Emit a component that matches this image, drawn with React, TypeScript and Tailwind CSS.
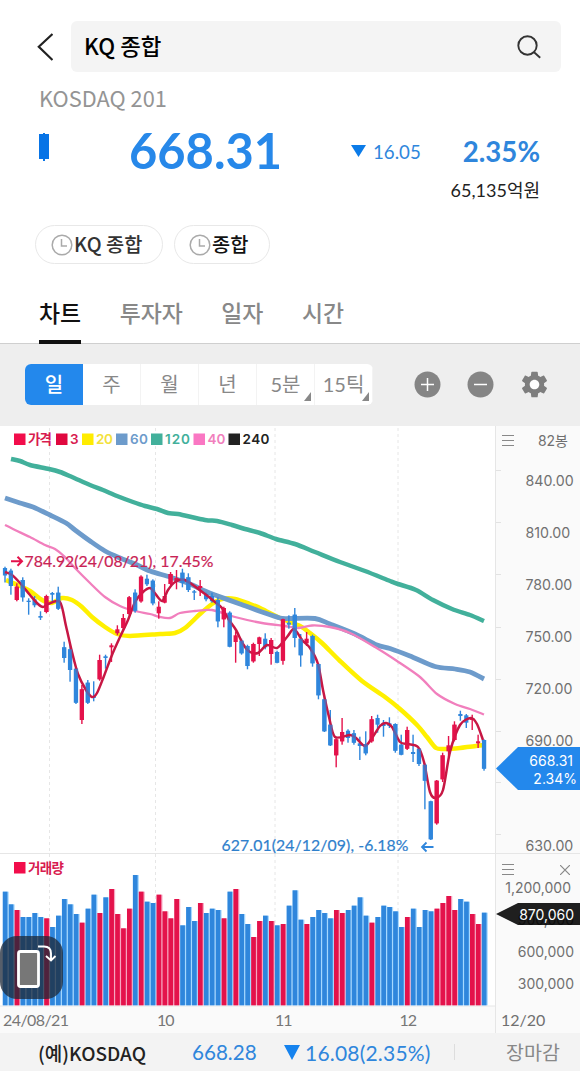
import { MdSettings } from "react-icons/md";

type Direction = "up" | "down";

// [direction, high, body top, body bottom, low]
type Candle = [Direction, number, number, number, number];

const UP = "#e4124b";
const DOWN = "#2f86dc";
const STEP = 5.914;

const candles: Candle[] = [
  ["down", 566.7, 568, 575.5, 582.5],
  ["down", 568.7, 570.7, 586, 594.7],
  ["up", 583.3, 586.7, 600, 601.3],
  ["down", 577.3, 580, 597.3, 601.7],
  ["down", 598.3, 600.7, 602, 614.7],
  ["down", 596, 599.3, 605.3, 607.3],
  ["down", 611.3, 616, 617.7, 620],
  ["up", 594.7, 596, 612, 613.3],
  ["down", 592, 593, 594.7, 602.7],
  ["down", 586.7, 592.7, 608.7, 610],
  ["down", 641.7, 647.3, 658, 662.7],
  ["down", 644.3, 649.3, 670, 681.7],
  ["down", 666.7, 668.7, 702.7, 704],
  ["up", 685, 689.3, 720, 724],
  ["down", 680, 682.7, 702.7, 704],
  ["down", 681.3, 696, 698, 701.3],
  ["up", 654.7, 660, 679.3, 680.7],
  ["down", 654.7, 656.3, 658, 668.7],
  ["up", 643.3, 645.3, 647.3, 662],
  ["up", 625.3, 629.3, 633.3, 635.3],
  ["up", 614, 618, 628, 630],
  ["up", 596, 597.3, 614, 615.3],
  ["down", 589.3, 592.7, 610.7, 612.7],
  ["up", 575.3, 576.7, 601.3, 602.7],
  ["down", 574.7, 578.7, 584.3, 586],
  ["down", 579.3, 580.7, 603.3, 605.3],
  ["up", 601.3, 606.7, 613.3, 618.7],
  ["up", 584, 596, 602.7, 603.3],
  ["up", 572, 574, 584, 585.3],
  ["up", 570, 578, 580.7, 589.3],
  ["down", 568.7, 572.7, 582.7, 587.3],
  ["down", 573.3, 577.3, 590, 592],
  ["down", 590, 591.3, 592.7, 600],
  ["up", 580, 586, 588, 596],
  ["down", 592.7, 594, 599.3, 601.3],
  ["down", 592.7, 596, 601.3, 602.7],
  ["down", 597.3, 600, 621.3, 627.3],
  ["up", 606.7, 608, 619.3, 627.3],
  ["down", 611.3, 612.7, 646.7, 647.3],
  ["up", 631.3, 635.3, 642, 662.7],
  ["down", 638.7, 640.7, 653.3, 654.7],
  ["down", 644.7, 646, 666, 669.3],
  ["up", 642.7, 644, 661.3, 662.7],
  ["up", 636.7, 637.3, 644, 656],
  ["down", 633.3, 638.7, 647.3, 649.3],
  ["up", 638, 640, 654, 664.7],
  ["down", 650.7, 652, 662.7, 663.3],
  ["up", 618.7, 619.3, 660.7, 664.7],
  ["down", 615.3, 622.7, 624.7, 628.7],
  ["down", 608, 614.7, 638, 647.3],
  ["down", 634, 638.7, 655.3, 666.7],
  ["up", 632, 638.7, 643.3, 646],
  ["down", 634.7, 636, 663.3, 666.7],
  ["down", 663, 664, 695.3, 699.3],
  ["down", 695.3, 699.3, 731.3, 732],
  ["down", 710, 724.7, 745.3, 746],
  ["up", 738.3, 739.3, 755.3, 767.3],
  ["up", 718, 732, 741.3, 744.7],
  ["down", 729.3, 730.7, 738, 742.7],
  ["down", 730, 733.3, 742.7, 744.7],
  ["down", 736.7, 743.3, 746, 760],
  ["down", 731.3, 744, 753.3, 755.3],
  ["up", 716, 719.3, 741.3, 742.7],
  ["down", 714.7, 718, 724.7, 732.7],
  ["down", 720, 723.3, 726, 736.7],
  ["down", 717.3, 723.3, 726, 728],
  ["down", 723.3, 724, 750.7, 752.7],
  ["down", 734.7, 744.7, 754.7, 755.3],
  ["up", 726.7, 730, 748.7, 750],
  ["down", 734.7, 752, 754, 762],
  ["down", 748, 748.7, 764, 766],
  ["down", 763.3, 764.7, 780.7, 809.3],
  ["down", 800.7, 801.3, 839.3, 840],
  ["up", 780, 780.7, 823.3, 824.7],
  ["up", 752.7, 755.3, 779.3, 782],
  ["up", 736, 745.3, 751.3, 756.7],
  ["up", 721.3, 724.7, 740, 741.3],
  ["down", 710.7, 714, 716, 720.7],
  ["down", 714, 715.3, 722.7, 728],
  ["up", 714.7, 718, 720, 730],
  ["up", 734.7, 741.3, 743.3, 748],
  ["down", 739.3, 740, 768.7, 770.7],
];

// Top edge of each volume bar, measured down from the top of the pane in thirds
const volumeTops = [
  125, 163, 180, 201, 201, 189, 201, 205, 231, 197, 147, 163, 192, 218, 176, 134, 189, 142, 117, 192, 235, 176,
  75, 125, 155, 159, 134, 184, 205, 147, 226, 171, 213, 159, 189, 176, 180, 205, 125, 117, 192, 222, 261, 213,
  197, 213, 226, 222, 167, 121, 209, 222, 201, 180, 189, 205, 180, 189, 180, 167, 142, 197, 218, 201, 167, 171,
  184, 231, 201, 176, 231, 180, 184, 176, 159, 138, 180, 147, 155, 192, 222, 188,
];

const volumeUp = new Set([
  2, 7, 13, 16, 18, 19, 20, 21, 23, 26, 27, 28, 29, 33, 37, 39, 42, 43, 45, 47, 51, 56, 57, 62, 68, 73, 74, 75, 76,
  79, 80,
]);

const averages = [
  {
    color: "#fff000",
    width: 4.5,
    points:
      "6,580 20,586 30,591 42,600 52,603 62,598 72,600 82,607 92,617 105,627 117,634 130,636 160,634 175,633 185,628 200,614 212,604 222,599 235,599 250,604 262,609 280,618 300,626 310,633 322,643 340,661 362,681 385,697 400,709 417,725 427,737 436,748 445,749 460,748 484,745",
  },
  {
    color: "#6d9bcb",
    width: 4.8,
    points:
      "5,498 20,503 33,507 50,515 66,523 75,530 90,541 105,551 120,558 135,564 150,571 170,577 190,584 205,591 215,595 240,604 262,612 280,618 290,618.5 315,618.5 330,624 355,634 377,645 390,648.5 410,656 435,666.5 455,669 470,672 484,679",
  },
  {
    color: "#42b09b",
    width: 4.5,
    points:
      "11,459 20,461 30,465 49,469 60,472 72,477 90,485 103,490 117,496 133,502 145,506 157,509 168,513 178,514 205,520 217,521 232,525 245,529 260,533 276,539 295,544 315,552 340,562 365,571 390,581 398,584 416,590 433,600 452,609 470,615 484,621",
  },
  {
    color: "#f17fbd",
    width: 2.3,
    points:
      "5,525 15,530 30,537 45,545 55,549 65,557 75,568 90,583 105,597 120,606 135,611 150,614 160,617 170,618 180,613 195,611 212,610 235,617 262,623 285,626 298,628 312,625.5 330,627 350,633 375,647 397,661 420,677 437,694 455,704 470,709 484,714.5",
  },
];

const shortAverage =
  "5,572 12,575 20,583 30,595 38,604 43,607 48,604 60,602 66,626 72,652 78,674 86,690 92,697 97,693 104,676 112,655 120,637 128,620 135,602 143,592 150,588 154,592 162,601 168,590 175,582 185,580 205,594 215,602 222,608 229,620 236,630 243,644 250,652 258,653 267,645 277,648 287,637 294,629 302,640 310,648 318,664 323,690 329,717 335,737 350,735 356,738 365,746 372,738 380,726 386,723 392,727 400,742 408,744 418,747 424,762 430,792 436,798 443,790 450,752 460,725 471,718 477,724 483,740";

const legend = [
  { label: "가격", color: "#f20d4b", text: "#d81b50", x: 14, width: 24 },
  { label: "3", color: "#e0083f", text: "#d81b50", x: 56, width: 9 },
  { label: "20", color: "#ffec00", text: "#f3e13c", x: 82, width: 17 },
  { label: "60", color: "#6d9bcb", text: "#6d9bcb", x: 116, width: 18 },
  { label: "120", color: "#42b09b", text: "#42b09b", x: 151, width: 25 },
  { label: "40", color: "#fa77c3", text: "#f17fbd", x: 193.5, width: 18 },
  { label: "240", color: "#222222", text: "#222222", x: 228.5, width: 27 },
];

const gridX = [49.5, 155.5, 275, 398];
const ticks = [470, 522, 574, 627, 679, 731, 782, 834];
const priceLabels = ["840.00", "810.00", "780.00", "750.00", "720.00", "690.00", "", "630.00"];
const periods = ["일", "주", "월", "년", "5분", "15틱"];
const tabs = ["차트", "투자자", "일자", "시간"];

const kr = "font-['Noto_Sans_CJK_KR',sans-serif]";
const lato = "font-[Lato,'Noto_Sans_CJK_KR',sans-serif]";
const inter = "font-[Inter,'Noto_Sans_CJK_KR',sans-serif]";

// Rounds a list of "x,y" points into a curve that passes through all of them
function smooth(points: string) {
  const p = points.split(" ").map((pair) => pair.split(",").map(Number));
  let d = `M${p[0][0]} ${p[0][1]}`;
  for (let i = 0; i < p.length - 1; i++) {
    const before = p[i - 1] ?? p[i];
    const [x1, y1] = p[i];
    const [x2, y2] = p[i + 1];
    const after = p[i + 2] ?? p[i + 1];
    d += `C${x1 + (x2 - before[0]) / 7} ${y1 + (y2 - before[1]) / 7} ${x2 - (after[0] - x1) / 7} ${y2 - (after[1] - y1) / 7} ${x2} ${y2}`;
  }
  return d;
}

function ClockIcon() {
  return (
    <svg className="size-[22px] shrink-0" viewBox="0 0 22 22" fill="none" stroke="#aaa" strokeWidth="1.5">
      <circle cx="11" cy="11" r="9.8" />
      <path d="M10.5 5v7h5.5" />
    </svg>
  );
}

function MenuIcon() {
  return (
    <svg className="h-[11px] w-3" viewBox="0 0 12 11" stroke="#888" strokeWidth="1">
      <path d="M0 .5h12M0 5.5h12M0 10.500h12" />
    </svg>
  );
}

function Header() {
  return (
    <header className="h-[344px] border-b border-[#cfcfcf] bg-white">
      <div className="flex items-center pt-[21px] pl-[37px]">
        <svg className="h-7 w-4" viewBox="0 0 16 28" fill="none" stroke="#222" strokeWidth="2.2">
          <path d="M15.5 1L1.8 13.8 15.5 27" />
        </svg>
        <div className="ml-[18px] flex h-[51px] w-[490px] items-center justify-between rounded-md bg-[#f4f4f4] pr-5 pl-[13px]">
          <span className={`${kr} pb-[2px] text-[22.4px] leading-none font-medium text-black`}>KQ 종합</span>
          <svg className="size-6" viewBox="0 0 24 24" fill="none" stroke="#333" strokeWidth="1.9">
            <circle cx="10.5" cy="10.5" r="9.2" />
            <path d="M16.8 17l6.4 5.8" />
          </svg>
        </div>
      </div>

      <p className={`${kr} mt-[10px] ml-[39px] h-[33px] text-[21.8px] leading-8 text-[#949494]`}>KOSDAQ 201</p>

      <div className="flex h-[64px] pl-[39px]">
        <svg className="mt-[18px] h-8 w-[10px] shrink-0" viewBox="0 0 10 32">
          <path d="M0 1h4V0h2v1h4v25H6v2H4v-2H0z" fill="#0874e6" />
        </svg>
        <strong className={`${lato} ml-20 w-[152px] text-[48.8px] leading-[70px] font-bold text-[#2788e9]`}>668.31</strong>
        <svg className="mt-[30px] ml-[70px] h-3 w-[15px] shrink-0" viewBox="0 0 15 12">
          <path d="M0 0h15L7.500 12z" fill="#0b7be8" />
        </svg>
        <span className={`${lato} ml-[7px] w-[48px] text-[18.7px] leading-[74px] text-[#2f86dc]`}>16.05</span>
        <strong className={`${lato} w-[119px] text-right text-[27.6px] leading-[74px] font-bold text-[#2f86dc]`}>
          2.35%
        </strong>
      </div>
      <p className={`${lato} h-6 w-[540px] text-right text-[18px] leading-[23px] text-[#222]`}>65,135억원</p>

      <div className={`${kr} mt-[22px] ml-[35px] flex gap-[11px] text-[19.8px] leading-none font-medium`}>
        <div className="flex h-[39px] w-[128px] items-center gap-px rounded-full border-[1.5px] border-[#e8e8e8] pl-[15px] text-[#333]">
          <ClockIcon />
          <span className="pb-px whitespace-nowrap">KQ 종합</span>
        </div>
        <div className="flex h-[39px] w-[96px] items-center gap-px rounded-full border-[1.5px] border-[#e8e8e8] pl-[14px] text-[#111]">
          <ClockIcon />
          <span className="pb-px whitespace-nowrap">종합</span>
        </div>
      </div>

      <nav className={`${kr} mt-[19px] ml-[39px] flex h-[61px] gap-[38.500px] text-[22.9px] leading-[58px] font-medium`}>
        {tabs.map((tab, i) => (
          <button
            key={tab}
            className={
              i === 0
                ? "flex h-[61px] border-b-4 border-[#111] text-[#111]"
                : "flex h-[61px] border-b-4 border-transparent text-[#888]"
            }
          >
            {tab}
          </button>
        ))}
      </nav>
    </header>
  );
}

function Toolbar() {
  return (
    <div className="flex h-[82px] items-center bg-[#eeeeee] pb-[2px] pl-[25px]">
      <div className={`${lato} flex h-[41px] w-[348px] overflow-hidden rounded-md bg-white text-[20px] text-[#888]`}>
        {periods.map((period, i) => (
          <button
            key={period}
            className={
              i === 0
                ? "relative w-[58px] bg-[#2388ec] leading-[40px] font-medium text-white"
                : "relative w-[58px] border-r border-[#f3f3f3] leading-[40px]"
            }
          >
            {period}
            {i > 3 && (
              <svg className="absolute right-[3px] bottom-1 h-[9px] w-[7px]" viewBox="0 0 7 9">
                <path d="M7 0v9H0z" fill="#888" />
              </svg>
            )}
          </button>
        ))}
      </div>
      <svg className="ml-[41px] size-[27px]" viewBox="0 0 27 27">
        <circle cx="13.500" cy="13.500" r="13" fill="#858585" />
        <path d="M7 13.500h13M13.500 7v13" stroke="#fff" strokeWidth="1.5" />
      </svg>
      <svg className="ml-[26px] size-[27px]" viewBox="0 0 27 27">
        <circle cx="13.500" cy="13.500" r="13" fill="#858585" />
        <path d="M7 13.500h13" stroke="#fff" strokeWidth="1.5" />
      </svg>
      <svg className="ml-[27px] size-[27px]" viewBox="0 0 27 27">
        <circle cx="13.500" cy="13.500" r="6" fill="#fff" />
        <MdSettings size={32} x={-2.5} y={-2.5} color="#7e7e7e" />
      </svg>
    </div>
  );
}

function Plot() {
  return (
    <svg className="block h-[607px] w-[496px]" viewBox="0 426 496 607">
      <rect x="0" y="1006" width="496" height="27" fill="#fafafa" />
      {gridX.map((x) => (
        <path key={x} d={`M${x} 428V1005`} stroke="#e6e6e6" strokeWidth="1" strokeDasharray="3 3" />
      ))}
      <path d="M0 853.500H496M0 1006H496M495.500 426V1033" stroke="#e6e6e6" strokeWidth="1" />

      {averages.map((line) => (
        <path key={line.color} d={smooth(line.points)} fill="none" stroke={line.color} strokeWidth={line.width} />
      ))}

      {candles.map(([direction, high, top, bottom, low], i) => {
        const x = 5 + i * STEP;
        return (
          <g key={i} fill={direction === "up" ? UP : DOWN}>
            <rect x={x - 0.7} y={high} width="1.4" height={low - high} />
            <rect x={x - 2.1} y={top} width="4.2" height={bottom - top} />
          </g>
        );
      })}
      <path d={smooth(shortAverage)} fill="none" stroke="#c71744" strokeWidth="2.500" />
      {/* Candles that sit in front of the short average */}
      {candles.map(([direction, , top, bottom], i) =>
        bottom - top > 9 ? (
          <rect
            key={i}
            x={2.9 + i * STEP}
            y={top}
            width="4.2"
            height={bottom - top}
            fill={direction === "up" ? UP : DOWN}
            fillOpacity="0.7"
          />
        ) : null,
      )}

      {volumeTops.map((top, i) => {
        const x = 2.8 + i * STEP;
        const y = 850 + top / 3;
        const up = volumeUp.has(i);
        return (
          <g key={i}>
            <rect x={x} y={y} width={STEP} height={1005.3 - y} fill={up ? "#f6a6c0" : "#a5d8ff"} />
            <rect x={x} y={y} width="4.700" height={1005.3 - y} fill={up ? UP : DOWN} />
          </g>
        );
      })}

      <g className={inter} fontSize="13.500" fontWeight="600">
        {legend.map((item) => (
          <g key={item.label}>
            <rect x={item.x} y="433.500" width="11.500" height="11.500" fill={item.color} />
            <text x={item.x + 14} y="444" fill={item.text} textLength={item.width}>
              {item.label}
            </text>
          </g>
        ))}
        <rect x="14" y="862" width="11.500" height="11.500" fill="#f20d4b" />
        <text x="28" y="872.500" fill="#d81b50" textLength="36">
          거래량
        </text>
      </g>

      <g className={lato} fontSize="15.800">
        <text x="24.500" y="567" fill="#c92355" stroke="#c92355" strokeWidth="0.200" textLength="189">
          784.92(24/08/21), 17.45%
        </text>
        <path d="M11 561.300h11M17.500 556.800l4.500 4.500-4.500 4.500" fill="none" stroke="#e4124b" strokeWidth="2" />
        <text x="221.500" y="851" fill="#2f80cc" stroke="#2f80cc" strokeWidth="0.200" textLength="187">
          627.01(24/12/09), -6.18%
        </text>
        <path d="M433.500 847h-11M426.500 842.500l-4.500 4.500 4.500 4.500" fill="none" stroke="#2f86dc" strokeWidth="1.800" />
      </g>

      <g className={lato} fontSize="16" fill="#777">
        <text x="3" y="1026" textLength="66">
          24/08/21
        </text>
        <text x="157" y="1026" textLength="17.500">
          10
        </text>
        <text x="275" y="1026" textLength="17.500">
          11
        </text>
        <text x="399.500" y="1026" textLength="17.500">
          12
        </text>
      </g>
    </svg>
  );
}

function Axis() {
  return (
    <div className={`${inter} relative h-[607px] w-[84px] bg-[#fafafa] text-[14px] text-[#707070]`}>
      <div className="flex h-7 items-center justify-between pt-px pr-3 pl-[6px]">
        <MenuIcon />
        <span className="text-[14px] leading-none">82봉</span>
      </div>
      <div className="h-[399px]">
        {priceLabels.map((label, i) => (
          <div key={i} className="h-[52.1px] pl-[29.5px] text-[14.2px] leading-[53px]">
            {label}
          </div>
        ))}
      </div>
      <div className="flex h-[34px] items-center justify-between border-t border-[#e6e6e6] pr-[10px] pb-[2px] pl-[6px]">
        <MenuIcon />
        <svg className="size-[10px]" viewBox="0 0 10 10" stroke="#888" strokeWidth="1.200">
          <path d="M0 0l10 10M10 0L0 10" />
        </svg>
      </div>
      <div className="-mt-[15px] h-[132px] pr-[6px] text-right text-[14px]">
        <div className="h-8 pr-[3px] leading-8">1,200,000</div>
        <div className="h-8 leading-8">900,000</div>
        <div className="h-8 leading-8">600,000</div>
        <div className="h-8 leading-8">300,000</div>
      </div>
      <div className={`${lato} mt-[6px] pl-[5px] text-[16px] leading-[19px]`}>12/20</div>

      {ticks.map((y) => (
        <i key={y} className="absolute left-0 h-px w-[5px] bg-[#e2e2e2]" style={{ top: y - 426 }} />
      ))}

      <div className="absolute top-[321px] left-0 h-[43px] w-[84px]">
        <svg className="absolute inset-0" width="84" height="43" viewBox="0 0 84 43">
          <path d="M0 21.500L22 0h62v43H22z" fill="#2388ec" />
        </svg>
        <div className="relative pt-[5px] text-right text-[14px] leading-[18px] text-white">
          <div className="pr-[7px]">668.31</div>
          <div className="pr-[3px]">2.34%</div>
        </div>
      </div>
      <div className="absolute top-[477px] left-0 h-[22px] w-[84px]">
        <svg className="absolute inset-0" width="84" height="22" viewBox="0 0 84 22">
          <path d="M0 11L22 0h62v22H22z" fill="#000" fillOpacity="0.880" />
        </svg>
        <div className="relative pr-[6px] text-right leading-[23px] text-white">870,060</div>
      </div>
    </div>
  );
}

function RotateButton() {
  return (
    <button className="absolute top-[510px] left-0 size-[63px] rounded-[17px] bg-[#1e2838]/75">
      <svg width="63" height="63" viewBox="0 0 63 63" fill="none" stroke="#fff">
        <rect x="18.500" y="15.500" width="20" height="35" rx="2" fill="#777" strokeWidth="2.800" />
        <path d="M38 10.500h6q7 0 7 7v6M46 20l5 4.500 4.500-4.500" strokeWidth="1.900" />
      </svg>
    </button>
  );
}

export default function App() {
  return (
    <div className="h-[1071px] w-[580px] overflow-hidden bg-white">
      <Header />
      <Toolbar />
      <main className="relative flex">
        <Plot />
        <Axis />
        <RotateButton />
      </main>
      <footer className={`${lato} flex h-[38px] items-center bg-[#f3f3f3] text-[21px] leading-none text-[#2f86dc]`}>
        <span className={`${kr} ml-[38px] w-[154px] text-[19px] font-medium text-[#222]`}>(예)KOSDAQ</span>
        <span className="w-[92px] text-[20.6px]">668.28</span>
        <svg className="h-[15px] w-4 shrink-0" viewBox="0 0 16 15">
          <path d="M0 0h16L8 15z" fill="#1683ee" />
        </svg>
        <span className="ml-[5px] w-[149px] tracking-[0.2px] whitespace-nowrap">16.08(2.35%)</span>
        <i className="h-4 w-px bg-[#ddd]" />
        <span className={`${kr} ml-[51px] text-[19.5px] whitespace-nowrap text-[#888]`}>장마감</span>
      </footer>
    </div>
  );
}
